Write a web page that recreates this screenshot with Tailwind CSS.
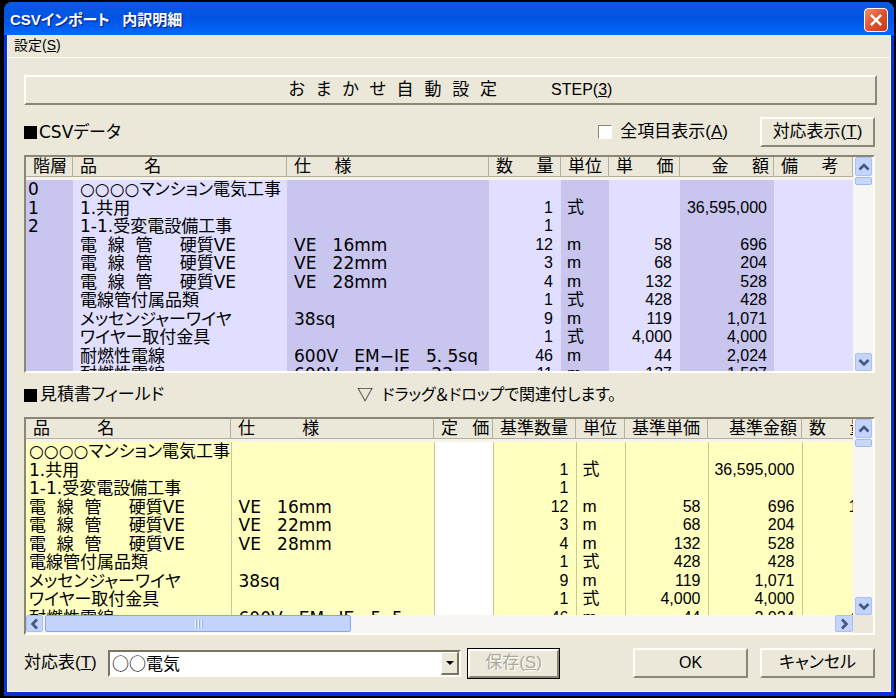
<!DOCTYPE html>
<html lang="ja">
<head>
<meta charset="utf-8">
<title>CSVインポート 内訳明細</title>
<script src="https://cdn.jsdelivr.net/npm/@tailwindcss/browser@4"></script>
</head>
<body class="bg-black text-black">
<div class="flex h-screen flex-col overflow-hidden bg-black pt-0.5 pr-0.5 pb-0.5 pl-1 text-[17px] leading-[18px] [font-family:'Liberation_Sans','Noto_Sans_CJK_JP',sans-serif] [font-feature-settings:'palt']">
<div class="flex min-h-0 flex-1 flex-col rounded-t-lg bg-[#0831d9]">
  <header class="flex h-[33px] shrink-0 items-center justify-between rounded-t-lg bg-linear-to-b from-[#0a5ae0] via-[#0054e3] to-[#0468ff] pr-1.5 pl-1.5 pt-0.5">
    <h1 class="text-[15px] font-bold whitespace-pre text-white [text-shadow:1px_1px_1px_#0a1883]">CSVインポート   内訳明細</h1>
    <button type="button" aria-label="閉じる" class="flex h-6 w-6 items-center justify-center rounded-sm border border-white bg-linear-to-br from-[#f08a6c] via-[#e2522c] to-[#c63a12]">
      <svg viewBox="0 0 24 24" class="h-5 w-5" fill="none" stroke="#fff" stroke-width="3" stroke-linecap="square"><path d="M7 7 17 17M17 7 7 17"/></svg>
    </button>
  </header>

  <div class="mr-[3px] mb-1 ml-[3px] flex min-h-0 flex-1 flex-col border-r border-b border-l border-[#f4f5ff] bg-[#ebe8d9]">
    <nav class="flex h-[23px] shrink-0 items-center border-b border-[#fbfaf3] pl-1.5 text-sm">
      <a href="#" class="pb-0.5">設定(<u>S</u>)</a>
    </nav>

    <main class="flex min-h-0 flex-1 flex-col pt-[17px] pr-[15px] pb-[13px] pl-4">
      <button type="button" class="-mr-0.5 h-[30px] shrink-0 border-2 border-t-[#fffff8] border-r-[#8a8773] border-b-[#8a8773] border-l-[#fffff8] text-center whitespace-pre [font-family:'DejaVu_Sans','Noto_Sans_CJK_JP',sans-serif]">お  ま  か  せ  自  動  設  定          <span class="text-base [font-family:'Liberation_Sans',sans-serif]">STEP(<u>3</u>)</span></button>

      <div class="mt-3 flex h-[30px] shrink-0 items-center">
        <h2 class="flex items-center gap-0.5 [font-family:'DejaVu_Sans','Noto_Sans_CJK_JP',sans-serif]"><span class="h-[13px] w-[13px] bg-black"></span>CSVデータ</h2>
        <label class="mr-8 ml-auto flex items-center gap-2"><input type="checkbox" class="h-3.5 w-3.5 appearance-none border border-t-[#8a8773] border-r-white border-b-white border-l-[#8a8773] bg-white"><span>全項目表示(<u>A</u>)</span></label>
        <button type="button" class="h-[30px] w-[115px] border-2 border-t-[#fffff8] border-r-[#8a8773] border-b-[#8a8773] border-l-[#fffff8]">対応表示(<u>T</u>)</button>
      </div>

      <section class="mt-2 flex min-h-0 flex-1 basis-0 border-2 border-t-[#8a8773] border-r-[#fffff8] border-b-[#fffff8] border-l-[#8a8773]">
        <div class="min-w-0 flex-1 overflow-hidden">
          <table class="w-full table-fixed border-collapse [&_td]:overflow-hidden [&_td]:p-0 [&_td]:align-middle [&_td]:whitespace-pre [&_td:nth-child(-n+3)]:pl-[7px] [&_td:nth-child(-n+3)]:[font-family:'DejaVu_Sans','Noto_Sans_CJK_JP',sans-serif] [&_td:first-child]:pl-0.5! [&_td:nth-child(4)]:pr-2 [&_td:nth-child(4)]:text-right [&_td:nth-child(4)]:text-base [&_td:nth-child(4)]:leading-[18px] [&_td:nth-child(5)]:pl-1.5 [&_td:nth-child(6)]:pr-2 [&_td:nth-child(6)]:text-right [&_td:nth-child(6)]:text-base [&_td:nth-child(6)]:leading-[18px] [&_td:nth-child(7)]:pr-[7px] [&_td:nth-child(7)]:text-right [&_td:nth-child(7)]:text-base [&_td:nth-child(7)]:leading-[18px] [&_tbody_tr]:h-[18px] [&_tbody_tr:nth-child(even)]:h-[19px] [&_td:nth-child(odd)]:bg-[#c8c5ee] [&_td:nth-child(even)]:bg-[#e0dfff] [&_th]:bg-[#f6f4ea] [&_th]:p-0 [&_th]:pb-[3px] [&_th]:font-normal [&_th]:text-left [&_th]:whitespace-pre [&_th>div]:h-5 [&_th>div]:overflow-hidden [&_th>div]:border-r [&_th>div]:border-b [&_th>div]:border-[#b3af9b] [&_th>div]:bg-[#ebe8d9] [&_th>div]:pl-[7px] [&_th>div]:leading-5">
            <colgroup><col class="w-[47px]"><col class="w-[214px]"><col class="w-[202px]"><col class="w-[72px]"><col class="w-12"><col class="w-[71px]"><col class="w-[94px]"><col></colgroup>
            <thead><tr><th><div>階層</div></th><th><div>品          名</div></th><th><div>仕     様</div></th><th><div>数     量</div></th><th><div>単位</div></th><th><div>単     価</div></th><th><div class="pr-1 text-right">金     額</div></th><th><div>備     考</div></th></tr></thead>
            <tbody>
            <tr><td>0</td><td>○○○○マンション電気工事</td><td></td><td></td><td></td><td></td><td></td><td></td></tr>
            <tr><td>1</td><td>1.共用</td><td></td><td>1</td><td>式</td><td></td><td>36,595,000</td><td></td></tr>
            <tr><td>2</td><td>1-1.受変電設備工事</td><td></td><td>1</td><td></td><td></td><td></td><td></td></tr>
            <tr><td></td><td>電  線  管     硬質VE</td><td>VE   16mm</td><td>12</td><td>m</td><td>58</td><td>696</td><td></td></tr>
            <tr><td></td><td>電  線  管     硬質VE</td><td>VE   22mm</td><td>3</td><td>m</td><td>68</td><td>204</td><td></td></tr>
            <tr><td></td><td>電  線  管     硬質VE</td><td>VE   28mm</td><td>4</td><td>m</td><td>132</td><td>528</td><td></td></tr>
            <tr><td></td><td>電線管付属品類</td><td></td><td>1</td><td>式</td><td>428</td><td>428</td><td></td></tr>
            <tr><td></td><td>メッセンジャーワイヤ</td><td>38sq</td><td>9</td><td>m</td><td>119</td><td>1,071</td><td></td></tr>
            <tr><td></td><td>ワイヤー取付金具</td><td></td><td>1</td><td>式</td><td>4,000</td><td>4,000</td><td></td></tr>
            <tr><td></td><td>耐燃性電線</td><td>600V   EM−IE   5. 5sq</td><td>46</td><td>m</td><td>44</td><td>2,024</td><td></td></tr>
            <tr><td></td><td>耐燃性電線</td><td>600V   EM−IE    22</td><td>11</td><td>m</td><td>137</td><td>1,507</td><td></td></tr>
            </tbody>
          </table>
        </div>
        <div class="flex w-5 shrink-0 flex-col bg-[#f7f6f2] pl-0.5">
          <button type="button" aria-label="上へ" class="flex h-[19px] w-[17px] items-center justify-center rounded-xs border border-[#a9c0f5] bg-[#c4d4fc]"><svg viewBox="0 0 12 12" class="h-3 w-3" fill="none" stroke="#40577f" stroke-width="2.6"><path d="M1.5 8.5 6 4l4.500 4.500"/></svg></button>
          <div class="mt-px h-2 w-[17px] rounded-xs border border-[#9db8f3] bg-[#c8d8fd]"></div>
          <button type="button" aria-label="下へ" class="mt-auto flex h-[18px] w-[17px] items-center justify-center rounded-xs border border-[#a9c0f5] bg-[#c4d4fc]"><svg viewBox="0 0 12 12" class="h-3 w-3" fill="none" stroke="#40577f" stroke-width="2.6"><path d="M1.5 4 6 8.500l4.500-4.500"/></svg></button>
        </div>
      </section>

      <div class="flex h-11 shrink-0 items-center">
        <h2 class="flex w-[333px] items-center gap-[3px]"><span class="h-[13px] w-[13px] bg-black"></span>見積書フィールド</h2>
        <p class="text-base whitespace-pre">▽  ドラッグ＆ドロップで関連付します。</p>
      </div>

      <section class="flex min-h-0 flex-1 basis-0 border-2 border-t-[#8a8773] border-r-[#fffff8] border-b-[#fffff8] border-l-[#8a8773]">
        <div class="flex min-w-0 flex-1 flex-col">
          <div class="min-h-0 flex-1 overflow-hidden">
          <table class="w-[848px] table-fixed border-collapse [&_td]:overflow-hidden [&_td]:border-r [&_td]:border-[#c9c893] [&_td]:bg-[#ffffc0] [&_td]:p-0 [&_td]:align-middle [&_td]:whitespace-pre [&_td:nth-child(-n+2)]:pl-[7px] [&_td:nth-child(-n+2)]:[font-family:'DejaVu_Sans','Noto_Sans_CJK_JP',sans-serif] [&_td:first-child]:pl-[3px]! [&_td:nth-child(3)]:bg-white [&_td:nth-child(4)]:pr-[7px] [&_td:nth-child(4)]:text-right [&_td:nth-child(4)]:text-base [&_td:nth-child(4)]:leading-[18px] [&_td:nth-child(5)]:pl-1.5 [&_td:nth-child(n+6)]:pr-[7px] [&_td:nth-child(n+6)]:text-right [&_td:nth-child(n+6)]:text-base [&_td:nth-child(n+6)]:leading-[18px] [&_tbody_tr]:h-[18px] [&_tbody_tr:nth-child(even)]:h-[19px] [&_th]:bg-[#f6f4ea] [&_th]:p-0 [&_th]:pb-[3px] [&_th]:font-normal [&_th]:text-left [&_th]:whitespace-pre [&_th>div]:h-5 [&_th>div]:overflow-hidden [&_th>div]:border-r [&_th>div]:border-b [&_th>div]:border-[#b3af9b] [&_th>div]:bg-[#ebe8d9] [&_th>div]:pl-[7px] [&_th>div]:leading-5">
            <colgroup><col class="w-[205px]"><col class="w-[203px]"><col class="w-[59px]"><col class="w-[83px]"><col class="w-[49px]"><col class="w-[83px]"><col class="w-[94px]"><col class="w-[72px]"></colgroup>
            <thead><tr><th><div>品          名</div></th><th><div>仕          様</div></th><th><div>定   価</div></th><th><div>基準数量</div></th><th><div>単位</div></th><th><div>基準単価</div></th><th><div class="pr-1 text-right">基準金額</div></th><th><div>数     量</div></th></tr></thead>
            <tbody>
            <tr><td>○○○○マンション電気工事</td><td></td><td></td><td></td><td></td><td></td><td></td><td></td></tr>
            <tr><td>1.共用</td><td></td><td></td><td>1</td><td>式</td><td></td><td>36,595,000</td><td></td></tr>
            <tr><td>1-1.受変電設備工事</td><td></td><td></td><td>1</td><td></td><td></td><td></td><td></td></tr>
            <tr><td>電  線  管     硬質VE</td><td>VE   16mm</td><td></td><td>12</td><td>m</td><td>58</td><td>696</td><td>12</td></tr>
            <tr><td>電  線  管     硬質VE</td><td>VE   22mm</td><td></td><td>3</td><td>m</td><td>68</td><td>204</td><td>3</td></tr>
            <tr><td>電  線  管     硬質VE</td><td>VE   28mm</td><td></td><td>4</td><td>m</td><td>132</td><td>528</td><td>4</td></tr>
            <tr><td>電線管付属品類</td><td></td><td></td><td>1</td><td>式</td><td>428</td><td>428</td><td>1</td></tr>
            <tr><td>メッセンジャーワイヤ</td><td>38sq</td><td></td><td>9</td><td>m</td><td>119</td><td>1,071</td><td>9</td></tr>
            <tr><td>ワイヤー取付金具</td><td></td><td></td><td>1</td><td>式</td><td>4,000</td><td>4,000</td><td>1</td></tr>
            <tr><td>耐燃性電線</td><td>600V   EM−IE   5. 5</td><td></td><td>46</td><td>m</td><td>44</td><td>2,024</td><td>46</td></tr>
            </tbody>
          </table>
          </div>
          <div class="flex h-[18px] shrink-0 bg-[#f7f6f2]">
            <button type="button" aria-label="左へ" class="flex h-[17px] w-[17px] items-center justify-center rounded-xs border border-[#a9c0f5] bg-[#c4d4fc]"><svg viewBox="0 0 12 12" class="h-3 w-3" fill="none" stroke="#40577f" stroke-width="2.6"><path d="M8 1.500 3.500 6 8 10.500"/></svg></button>
            <div class="ml-0.5 flex h-[17px] w-[37%] items-center justify-center gap-px rounded-xs border border-[#86a6ee] bg-[#c4d3fd] pl-0.5"><span class="h-2 w-0.5 border-r border-[#8ca9ee] bg-white"></span><span class="h-2 w-0.5 border-r border-[#8ca9ee] bg-white"></span><span class="h-2 w-0.5 border-r border-[#8ca9ee] bg-white"></span></div>
            <button type="button" aria-label="右へ" class="ml-auto flex h-[17px] w-[18px] items-center justify-center rounded-xs border border-[#a9c0f5] bg-[#c4d4fc]"><svg viewBox="0 0 12 12" class="h-3 w-3" fill="none" stroke="#40577f" stroke-width="2.6"><path d="M4 1.500 8.500 6 4 10.500"/></svg></button>
          </div>
        </div>
        <div class="flex w-5 shrink-0 flex-col bg-[#ebe8d9] pb-[18px]">
          <div class="flex flex-1 flex-col bg-[#f7f6f2] pl-0.5">
            <button type="button" aria-label="上へ" class="flex h-[19px] w-[17px] items-center justify-center rounded-xs border border-[#a9c0f5] bg-[#c4d4fc]"><svg viewBox="0 0 12 12" class="h-3 w-3" fill="none" stroke="#40577f" stroke-width="2.6"><path d="M1.500 8.500 6 4l4.500 4.500"/></svg></button>
            <div class="mt-px h-2 w-[17px] rounded-xs border border-[#9db8f3] bg-[#c8d8fd]"></div>
            <button type="button" aria-label="下へ" class="mt-auto flex h-[18px] w-[17px] items-center justify-center rounded-xs border border-[#a9c0f5] bg-[#c4d4fc]"><svg viewBox="0 0 12 12" class="h-3 w-3" fill="none" stroke="#40577f" stroke-width="2.6"><path d="M1.500 4 6 8.500l4.500-4.500"/></svg></button>
          </div>
        </div>
      </section>

      <div class="mt-[13px] flex h-[30px] shrink-0 items-center">
        <label for="map" class="w-[84px]">対応表(<u>T</u>)</label>
        <div class="relative h-[27px] w-[353px]">
          <select id="map" class="block h-full w-full appearance-none border-2 border-t-[#77745f] border-r-[#fffff8] border-b-[#fffff8] border-l-[#77745f] bg-white pl-0.5 leading-5 [font-family:'Noto_Sans_CJK_JP',sans-serif]"><option>○○電気</option></select>
          <span class="pointer-events-none absolute top-0.5 right-0.5 bottom-0.5 flex w-[18px] items-center justify-center border-t border-r-2 border-b-2 border-l border-t-white border-r-[#77745f] border-b-[#77745f] border-l-white bg-[#ebe8d9]"><svg viewBox="0 0 8 4" class="h-1 w-2"><path d="M0 0h8L4 4z"/></svg></span>
        </div>
        <button type="button" disabled class="ml-1.5 h-[31px] w-[93px] border border-black text-[#aca899] [text-shadow:1px_1px_0_#fff]"><span class="flex h-full items-center justify-center border-2 border-t-[#fffff8] border-r-[#8a8773] border-b-[#8a8773] border-l-[#fffff8]">保存(<u>S</u>)</span></button>
        <button type="button" class="ml-auto h-[30px] w-[115px] border-2 border-t-[#fffff8] border-r-[#8a8773] border-b-[#8a8773] border-l-[#fffff8] text-base">OK</button>
        <button type="button" class="ml-3 h-[30px] w-[115px] border-2 border-t-[#fffff8] border-r-[#8a8773] border-b-[#8a8773] border-l-[#fffff8]">キャンセル</button>
      </div>
    </main>
  </div>
</div>
</div>
</body>
</html>
